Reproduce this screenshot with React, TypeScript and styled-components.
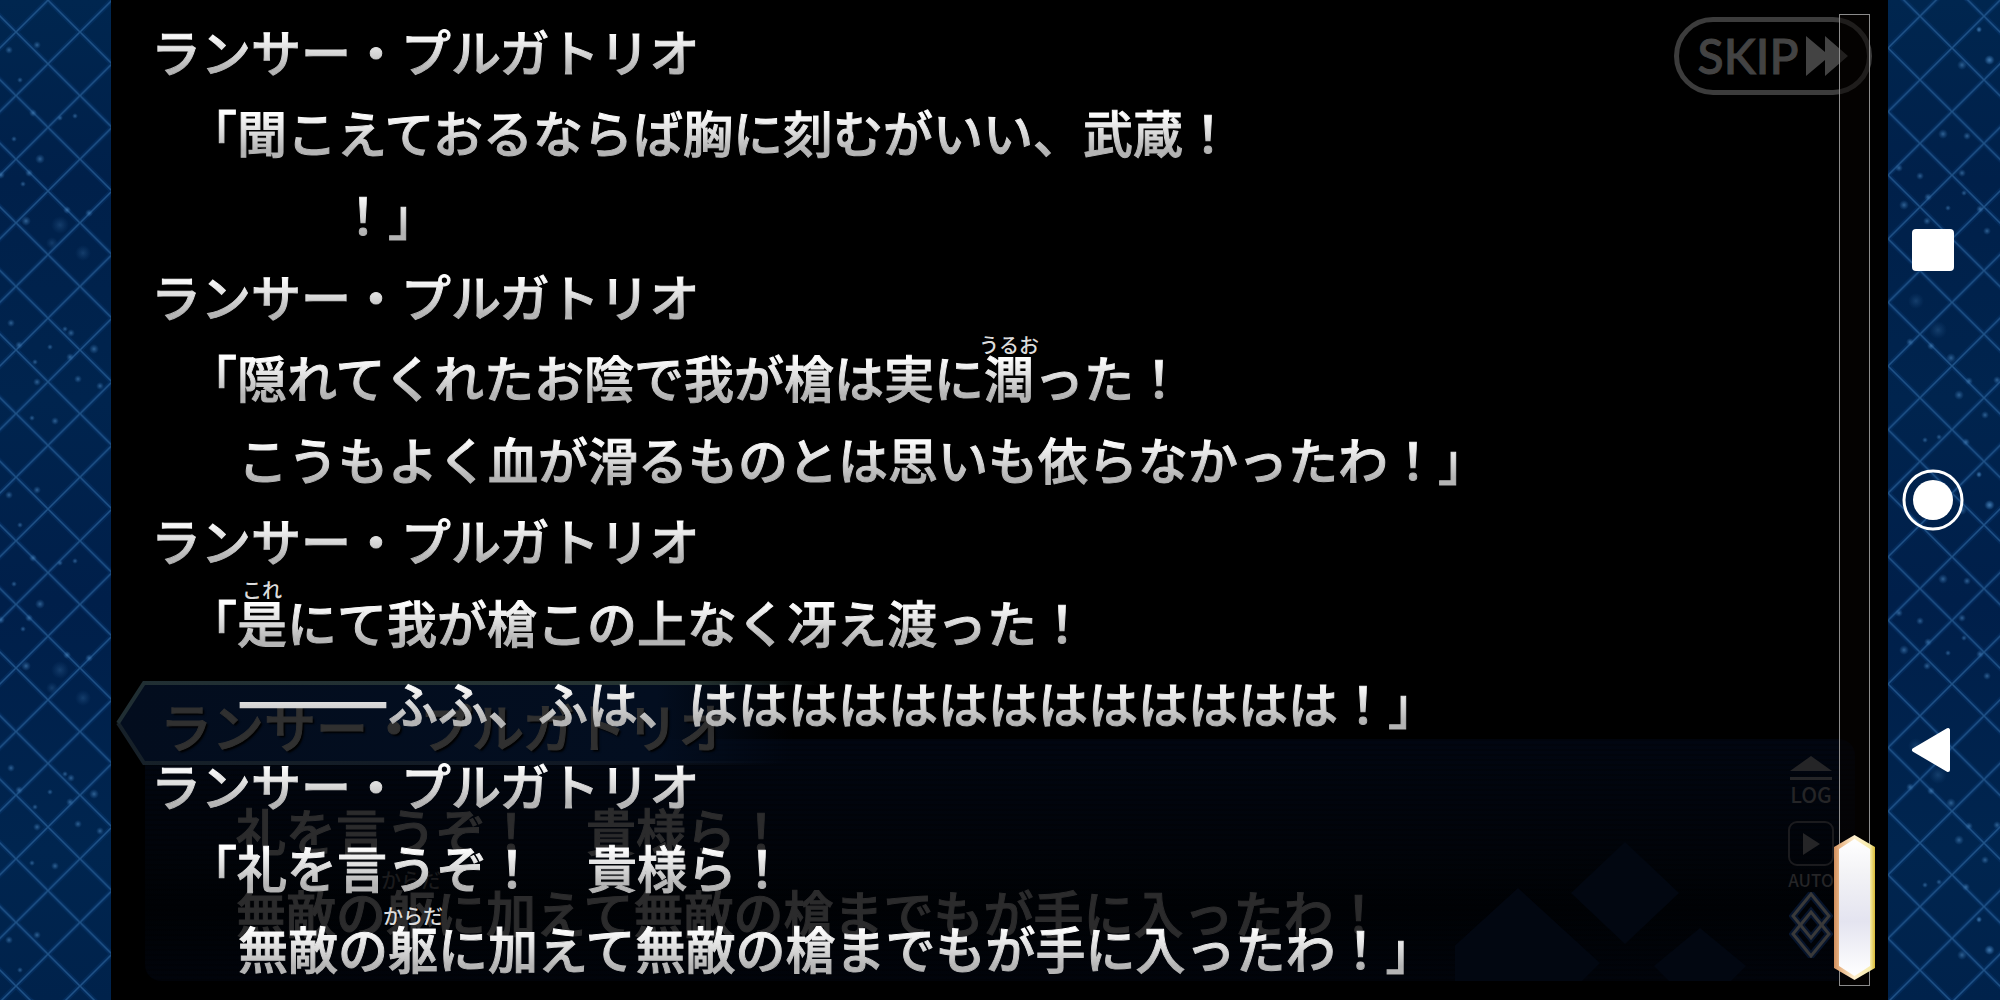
import React from "react";
import styled, { createGlobalStyle, css } from "styled-components";

const GlobalStyle = createGlobalStyle`
  *, *::before, *::after { box-sizing: border-box; }
  html, body { margin: 0; background: #000; }
  body { font-family: "Noto Sans CJK JP", "Noto Sans", sans-serif; overflow: hidden; }
  button { appearance: none; border: 0; padding: 0; background: none; color: inherit; font: inherit; cursor: pointer; }
`;

const Screen = styled.div`
  display: grid;
  grid-template-columns: 111px 1fr 112px;
  height: 100vh;
`;

const SidePanel = styled.div`
  position: relative;
  overflow: hidden;
  background: linear-gradient(180deg, #00264f 0%, #00204a 18%, #00244e 40%, #001f4a 60%, #00254f 85%, #00224b 100%);
`;

const Lattice = styled.svg`
  position: absolute;
  inset: 0;
  width: 100%;
  height: 100%;
`;

const NavBar = styled.nav`
  position: relative;
  display: grid;
  grid-auto-rows: 25vh;
  align-content: center;
  height: 100%;
  width: 90px;
`;

const NavButton = styled.button`
  display: grid;
  place-items: center;
  svg { display: block; }
`;

const Stage = styled.main`
  position: relative;
  overflow: hidden;
  background: #000;
`;

const Dialogue = styled.section`
  position: absolute;
  left: 34px;
  right: 33px;
  bottom: 19px;
  height: 242px;
  border-radius: 16px;
  overflow: hidden;
  background:
    repeating-linear-gradient(180deg, rgba(0, 0, 0, 0.25) 0 2px, transparent 2px 5px),
    linear-gradient(180deg, #010611 0%, #01040a 45%, #000205 70%, #01040b 100%);
`;

const Diamonds = styled.svg`
  position: absolute;
  right: 0;
  bottom: 0;
`;

const DialogueText = styled.div`
  position: absolute;
  left: 91px;
  top: 60px;
`;

const NamePlate = styled.div`
  position: absolute;
  left: 5px;
  bottom: 235px;
  width: 720px;
  height: 84px;
  display: flex;
  align-items: center;
  padding: 6px 0 0 44px;
`;

const PlateShape = styled.svg`
  position: absolute;
  inset: 0;
`;

const GhostName = styled.span`
  position: relative;
  font-size: 52px;
  font-weight: 500;
  line-height: 60px;
  white-space: nowrap;
  color: #303030;
  -webkit-text-stroke: 1px #303030;
  text-shadow: 2px 2px 2px #000;
`;

const Transcript = styled.div`
  position: relative;
  display: grid;
  grid-auto-rows: 1fr;
  align-items: center;
  height: 100%;
  padding: 9px 80px 12px 40px;
`;

const lineText = css`
  margin: 0;
  font-size: 50px;
  font-weight: 500;
  line-height: 60px;
  white-space: pre;
`;

const silver = css`
  color: transparent;
  background: linear-gradient(180deg, #fff 20%, #dedede 50%, #b4b4b4 82%);
  background-clip: text;
  -webkit-background-clip: text;
  -webkit-text-stroke: 1px transparent;
`;

const Line = styled.p<{ $indent: number }>`
  ${lineText}
  ${silver}
  padding-left: ${(p) => p.$indent}px;
`;

const Dash = styled.span`
  -webkit-text-stroke: 4px transparent;
`;

const GhostLine = styled.p`
  ${lineText}
  height: 82px;
  color: #2b2b2c;
  -webkit-text-stroke: 1px #2b2b2c;
`;

const Reading = styled.span<{ $ghost?: boolean }>`
  position: relative;
  display: inline-block;
  ${(p) => !p.$ghost && silver}
`;

const Gloss = styled.span<{ $ghost?: boolean }>`
  position: absolute;
  left: 50%;
  top: -13px;
  transform: translateX(-50%);
  font-size: 20px;
  line-height: 24px;
  color: ${(p) => (p.$ghost ? "#1b1b1d" : "#dcdcdc")};
  -webkit-text-stroke: 0;
`;

const SkipButton = styled.button`
  position: absolute;
  top: 17px;
  right: 16px;
  width: 198px;
  height: 78px;
  display: flex;
  align-items: center;
  justify-content: center;
  gap: 8px;
  && {
    border: 5px solid #3c3c3c;
    border-radius: 39px;
    color: #434343;
    font: 500 48px/60px Lato, sans-serif;
    -webkit-text-stroke: 1px #434343;
  }
`;

const Controls = styled.div`
  position: absolute;
  right: 54px;
  bottom: 42px;
  width: 46px;
  display: flex;
  flex-direction: column;
  align-items: center;
  color: #252527;
`;

const Control = styled.button<{ $size: number }>`
  display: flex;
  flex-direction: column;
  align-items: center;
  && { font-size: ${(p) => p.$size}px; line-height: 24px; font-weight: 500; }
  svg { display: block; }
`;

const Track = styled.div`
  position: absolute;
  top: 14px;
  right: 18px;
  bottom: 14px;
  width: 31px;
  border: 1px solid #8b8b8b;
  background: rgba(8, 3, 2, 0.55);
`;

const Thumb = styled.div`
  position: absolute;
  left: -6px;
  bottom: 5px;
  width: 41px;
  height: 145px;
  svg { display: block; }
`;

type Dot = [number, number, number?];

const LEFT_DOTS: Dot[] = [
  [9, 50, 3], [37, 45, 3], [20, 80], [33, 113, 3], [60, 118], [75, 116], [14, 139], [40, 159, 4], [29, 173, 3],
  [1, 175, 3], [23, 184], [67, 210, 3], [89, 213, 3], [60, 225, 8], [26, 221, 4], [83, 253, 7], [52, 243, 5],
  [11, 323, 3], [71, 333, 3], [65, 329], [19, 345, 3], [50, 347], [94, 349, 4], [70, 357, 3], [35, 362],
  [37, 382, 3], [78, 379, 3], [100, 386, 3], [32, 418], [55, 421, 3],
];

const RIGHT_DOTS: Dot[] = [
  [102, 60, 4], [74, 65, 4], [91, 30], [55, 134, 4], [79, 136, 3], [11, 168, 3], [32, 176, 3], [74, 173, 3],
  [40, 197, 3], [16, 205, 4], [76, 193], [60, 208], [92, 209, 3], [39, 221, 3], [99, 231, 3], [28, 301, 7],
  [50, 330, 8], [22, 342, 3], [43, 346, 3], [63, 358, 4], [81, 381, 3], [109, 380, 3], [71, 395, 4], [97, 415, 3],
  [37, 440], [51, 437], [78, 442, 3], [91, 474], [101, 505, 4],
];

const TILE = 445;

function Pattern({ id, x, y, dots }: { id: string; x: number; y: number; dots: Dot[] }) {
  return (
    <Lattice aria-hidden="true">
      <defs>
        <pattern id={id} x={x} y={y} width="64" height="63.6" patternUnits="userSpaceOnUse">
          <path d="M0 0L64 63.6M64 0L0 63.6" stroke="#0d478a" strokeOpacity="0.26" strokeWidth="5" />
          <path d="M0 0L64 63.6M64 0L0 63.6" stroke="#2c649a" strokeOpacity="0.7" strokeWidth="1.5" />
        </pattern>
        <radialGradient id={id + "dot"}>
          <stop offset="0" stopColor="#4b86bd" stopOpacity="0.8" />
          <stop offset="1" stopColor="#2c68a6" stopOpacity="0" />
        </radialGradient>
      </defs>
      <rect width="100%" height="100%" fill={`url(#${id})`} />
      {[-1, 0, 1, 2].map((n) =>
        dots.map(([cx, cy, r = 2], i) => (
          <circle key={`${n}-${i}`} cx={cx} cy={cy + n * TILE} r={r + 1} fill={`url(#${id}dot)`} opacity={r > 4 ? 0.35 : 0.8} />
        ))
      )}
    </Lattice>
  );
}

function Ruby({ base, text, ghost }: { base: string; text: string; ghost?: boolean }) {
  return (
    <Reading $ghost={ghost}>
      {base}
      <Gloss $ghost={ghost}>{text}</Gloss>
    </Reading>
  );
}

const SPEAKER = "ランサー・プルガトリオ";
const NAME = 0;
const QUOTE = 36;
const BODY = 87;

const LINES: { indent: number; text: React.ReactNode }[] = [
  { indent: NAME, text: SPEAKER },
  { indent: QUOTE, text: "「聞こえておるならば胸に刻むがいい、武蔵！" },
  { indent: BODY, text: "　　！」" },
  { indent: NAME, text: SPEAKER },
  { indent: QUOTE, text: <>「隠れてくれたお陰で我が槍は実に<Ruby base="潤" text="うるお" />った！</> },
  { indent: BODY, text: "こうもよく血が滑るものとは思いも依らなかったわ！」" },
  { indent: NAME, text: SPEAKER },
  { indent: QUOTE, text: <>「<Ruby base="是" text="これ" />にて我が槍この上なく冴え渡った！</> },
  { indent: BODY, text: <><Dash>―――</Dash>ふふ、ふは、ははははははははははははは！」</> },
  { indent: NAME, text: SPEAKER },
  { indent: QUOTE, text: "「礼を言うぞ！　貴様ら！" },
  { indent: BODY, text: <>無敵の<Ruby base="躯" text="からだ" />に加えて無敵の槍までもが手に入ったわ！」</> },
];

export default function App() {
  return (
    <>
      <GlobalStyle />
      <Screen>
        <SidePanel>
          <Pattern id="latticeLeft" x={16} y={32} dots={LEFT_DOTS} />
        </SidePanel>

        <Stage>
          <Dialogue>
            <Diamonds width="400" height="150" viewBox="0 -40 400 150" fill="#020711" aria-hidden="true">
              <path d="M170 -29L224 22L170 73L116 22Z" />
              <path d="M63 17L145 92L127 110H-1L-19 92Z" />
              <path d="M245 57L291 95L276 110H214L199 95Z" />
            </Diamonds>
            <DialogueText>
              <GhostLine>礼を言うぞ！　貴様ら！</GhostLine>
              <GhostLine>無敵の<Ruby base="躯" text="からだ" ghost />に加えて無敵の槍までもが手に入ったわ！</GhostLine>
            </DialogueText>
          </Dialogue>

          <NamePlate>
            <PlateShape width="720" height="84" aria-hidden="true">
              <defs>
                <linearGradient id="plateFill">
                  <stop offset="0" stopColor="#030d1e" />
                  <stop offset="0.75" stopColor="#030e20" />
                  <stop offset="0.94" stopColor="#030e20" stopOpacity="0" />
                </linearGradient>
                <linearGradient id="plateTop" gradientUnits="userSpaceOnUse" x1="0" y1="0" x2="720" y2="0">
                  <stop offset="0" stopColor="#202e33" />
                  <stop offset="0.8" stopColor="#263432" />
                  <stop offset="0.98" stopColor="#263432" stopOpacity="0" />
                </linearGradient>
                <linearGradient id="plateBottom" gradientUnits="userSpaceOnUse" x1="0" y1="0" x2="720" y2="0">
                  <stop offset="0" stopColor="#172129" />
                  <stop offset="0.65" stopColor="#101824" />
                  <stop offset="0.92" stopColor="#101824" stopOpacity="0" />
                </linearGradient>
              </defs>
              <path d="M720 2H28L2 42L28 82H720Z" fill="url(#plateFill)" />
              <path d="M2 42L28 82H720" fill="none" stroke="url(#plateBottom)" strokeWidth="4" />
              <path d="M720 2H28L2 42" fill="none" stroke="url(#plateTop)" strokeWidth="4" />
            </PlateShape>
            <GhostName>{SPEAKER}</GhostName>
          </NamePlate>

          <Controls>
            <Control $size={21}>
              <svg width="44" height="26" viewBox="0 0 44 26" fill="currentColor" aria-hidden="true">
                <path d="M22 0L43 15H1Z" />
                <path d="M1 21H43V24H1Z" />
              </svg>
              LOG
            </Control>
            <Control $size={17}>
              <svg width="46" height="62" viewBox="0 0 46 62" aria-hidden="true">
                <rect x="1" y="16" width="44" height="43" rx="8" fill="none" stroke="#1b1b1e" strokeWidth="2" />
                <path d="M15 27V49L32 38Z" fill="currentColor" />
              </svg>
              AUTO
            </Control>
            <svg width="44" height="66" viewBox="0 0 44 66" fill="none" aria-hidden="true">
              <g stroke="#06142c" strokeWidth="7">
                <path d="M22 2L40 24L22 46L4 24Z" />
                <path d="M22 20L40 42L22 64L4 42Z" />
              </g>
              <g stroke="#393939" strokeWidth="3">
                <path d="M22 2L40 24L22 46L4 24Z" />
                <path d="M22 20L40 42L22 64L4 42Z" />
              </g>
            </svg>
          </Controls>

          <SkipButton>
            SKIP
            <svg width="42" height="40" viewBox="0 0 42 40" fill="currentColor" aria-hidden="true">
              <path d="M0 0L19 16V0L42 20L19 40V24L0 40Z" />
            </svg>
          </SkipButton>

          <Transcript id="log">
            {LINES.map((line, i) => (
              <Line key={i} $indent={line.indent}>{line.text}</Line>
            ))}
          </Transcript>

          <Track role="scrollbar" aria-label="Log" aria-controls="log" aria-valuenow={100}>
            <Thumb>
              <svg width="41" height="145" viewBox="0 0 41 145" aria-hidden="true">
                <defs>
                  <linearGradient id="thumbFill" x1="0" y1="0" x2="0" y2="1">
                    <stop offset="0" stopColor="#fff" />
                    <stop offset="0.25" stopColor="#f3f3f6" />
                    <stop offset="0.6" stopColor="#e4e4f0" />
                    <stop offset="1" stopColor="#fff" />
                  </linearGradient>
                  <linearGradient id="thumbEdge">
                    <stop offset="0" stopColor="#cf8d5c" />
                    <stop offset="0.12" stopColor="#e6b080" />
                    <stop offset="0.5" stopColor="#fff0cf" />
                    <stop offset="0.88" stopColor="#f7ecaa" />
                    <stop offset="1" stopColor="#d9bb35" />
                  </linearGradient>
                </defs>
                <path d="M20.500 0L41 12V133L20.500 145L0 133V12Z" fill="url(#thumbEdge)" />
                <path d="M20.500 4L36 14V131L20.500 141L5 131V14Z" fill="url(#thumbFill)" />
              </svg>
            </Thumb>
          </Track>
        </Stage>

        <SidePanel>
          <Pattern id="latticeRight" x={0} y={48} dots={RIGHT_DOTS} />
          <NavBar aria-label="System">
            <NavButton aria-label="Recent apps">
              <svg width="42" height="42"><rect width="42" height="42" rx="4" fill="#fff" /></svg>
            </NavButton>
            <NavButton aria-label="Home">
              <svg width="62" height="62">
                <circle cx="31" cy="31" r="29" fill="none" stroke="#fff" strokeWidth="3" />
                <circle cx="31" cy="31" r="20" fill="#fff" />
              </svg>
            </NavButton>
            <NavButton aria-label="Back">
              <svg width="44" height="46">
                <path d="M3 23L37 3V43Z" fill="#fff" stroke="#fff" strokeWidth="4" strokeLinejoin="round" />
              </svg>
            </NavButton>
          </NavBar>
        </SidePanel>
      </Screen>
    </>
  );
}
